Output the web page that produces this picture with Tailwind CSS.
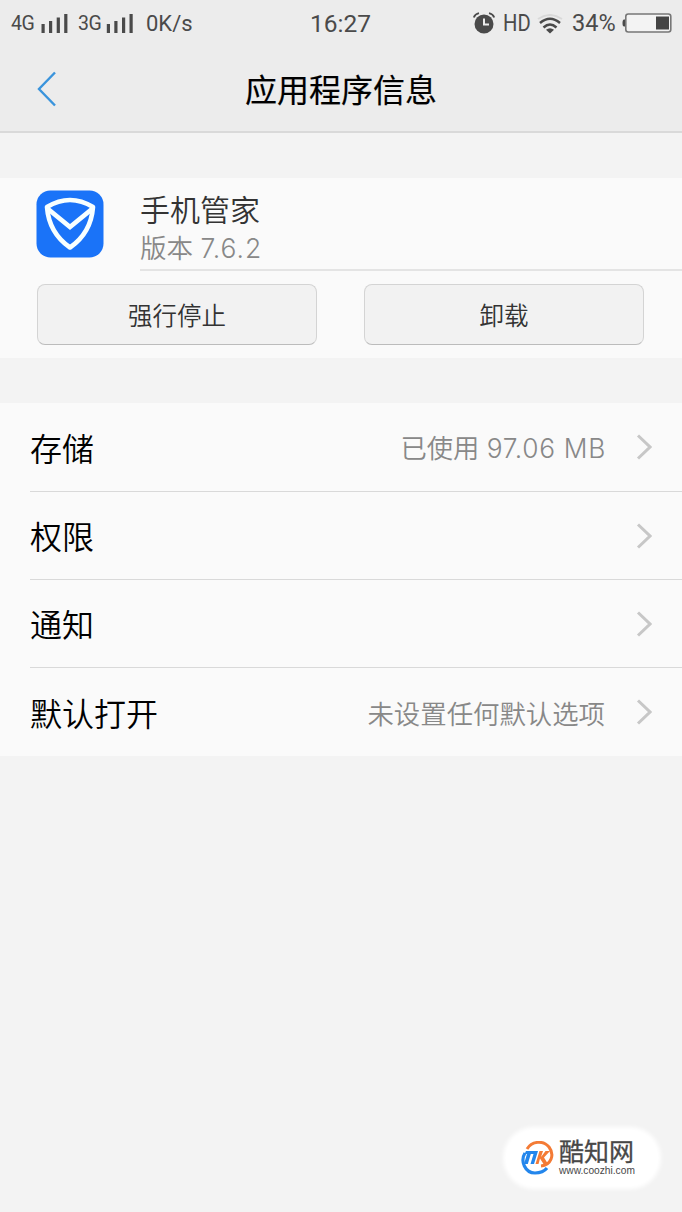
<!DOCTYPE html>
<html lang="zh-CN">
<head>
<meta charset="utf-8">
<title>应用程序信息</title>
<script src="https://cdn.jsdelivr.net/npm/@tailwindcss/browser@4"></script>
</head>
<body class="w-[682px] h-[1212px] overflow-hidden bg-[#f3f3f3] font-['Inter','Noto_Sans_CJK_SC',sans-serif] relative">
<header class="h-[133px] bg-[#ececec] border-b-2 border-[#d9d9d9]">
  <div class="h-[47px] relative flex items-center justify-between pl-[11px] pr-[10px] text-[#4a4a4a] leading-none whitespace-nowrap font-['Roboto',sans-serif]">
    <div class="flex items-center">
      <span class="text-[19.500px] w-[30px] tracking-[-0.5px]">4G</span>
      <svg class="w-[28px] h-[20px] mr-[9px]" viewBox="0 0 28 20" fill="#4a4a4a"><path d="M.5 10h3.200v9H.5zM8 7h3.200v12H8zM15.700 3.500h3.200V19h-3.200zM23.200 0h3.200v19h-3.200z"/></svg>
      <span class="text-[19.500px] w-[28px] tracking-[-0.5px]">3G</span>
      <svg class="w-[28px] h-[20px] mr-[12px]" viewBox="0 0 28 20" fill="#4a4a4a"><path d="M.8 10H4v9H.8zM8.300 7h3.200v12H8.300zM16 3.500h3.200V19H16zM23.500 0h3.200v19h-3.200z"/></svg>
      <span class="text-[22px] pt-px">0K/s</span>
    </div>
    <span class="absolute left-[310px] top-[12px] text-[24.500px]">16:27</span>
    <div class="flex items-center">
      <svg class="w-[22px] h-[22px] mr-[8px] mb-[2px]" viewBox="0 0 22 22"><circle cx="11" cy="12" r="9.500" fill="#4a4a4a"/><path d="M.8 5.500Q2 2 6 1.200M21.200 5.500Q20 2 16 1.200" fill="none" stroke="#4a4a4a" stroke-width="1.800"/><path d="M11 6.500V12.500H16" fill="none" stroke="#ececec" stroke-width="2"/></svg>
      <span class="text-[23.500px] w-[34px] origin-left scale-x-[.86]">HD</span>
      <svg class="w-[26px] h-[20px] mr-[9px]" viewBox="0 0 26 20" fill="none"><path d="M1 5Q13-3 25 5" stroke="#d9d9d9" stroke-width="2"/><path d="M3 9Q13 .5 23 9M6.500 13.500Q13 7.500 19.500 13.500" stroke="#4a4a4a" stroke-width="2.500"/><path d="M9 15.800Q13 12.800 17 15.800L13 19.500z" fill="#4a4a4a"/></svg>
      <span class="text-[23.500px] w-[50px] pt-px">34%</span>
      <svg class="w-[50px] h-[20px] mb-[2px]" viewBox="0 0 50 20"><path d="M3 6.500H2Q.5 6.500.5 10T2 13.500H3z" fill="#4a4a4a"/><rect x="3.800" y="1" width="45" height="18" rx="2.500" fill="#f3f3f3" stroke="#777" stroke-width="1.600"/><path d="M34 3.500H47V16.500H34z" fill="#444"/></svg>
    </div>
  </div>
  <div class="h-[84px] relative flex items-center justify-center">
    <svg class="absolute left-[36px] top-[24px] w-[22px] h-[36px]" viewBox="0 0 22 36" fill="none" stroke="#3a94dc" stroke-width="2.400"><path d="M19 1.500L3 18L19 34.500"/></svg>
    <h1 class="text-[32px] leading-[40px] pt-[3px] font-normal text-black [-webkit-text-stroke:0.2px_black]">应用程序信息</h1>
  </div>
</header>
<section class="mt-[45px] h-[180px] bg-[#fafafa] flex flex-col">
  <div class="flex h-[93px] pl-[36px]">
    <svg class="w-[68px] h-[68px] mt-[12px] mr-[36px]" viewBox="0 0 68 68"><rect x=".5" y=".5" width="67" height="67" rx="14" fill="#1a73f8"/><path d="M11 17Q34 3 57 17Q55 43 34 57.500Q13 43 11 17Z" fill="none" stroke="#f7ffff" stroke-width="4.600" stroke-linejoin="round"/><path d="M12 19L34 37L56 19" fill="none" stroke="#f7ffff" stroke-width="4.800"/></svg>
    <div class="flex-1 border-b-2 border-[#e4e4e4]">
      <div class="mt-[13px] text-[30px] leading-[38px] text-[#333] font-[350]">手机管家</div>
      <div class="text-[26.500px] leading-[38px] text-[#888] font-[350]">版本 <span class="font-light tracking-[0.9px]">7.6.2</span></div>
    </div>
  </div>
  <div class="flex gap-[47px] pl-[37px] pr-[38px] mt-[13px]">
    <button class="flex-1 h-[61px] pt-[3px] rounded-[8px] border border-[#d4d4d4] border-b-[#bcbcbc] bg-[#f2f2f2] text-[24.500px] text-[#333] font-[350]">强行停止</button>
    <button class="flex-1 h-[61px] pt-[3px] rounded-[8px] border border-[#d4d4d4] border-b-[#bcbcbc] bg-[#f2f2f2] text-[24.500px] text-[#333] font-[350]">卸载</button>
  </div>
</section>
<ul class="mt-[45px] h-[353px] bg-[#fafafa] pl-[30px] text-[32px] text-black font-[350]">
  <li class="h-[89px] border-b border-[#d9d9d9] flex items-center pr-[30px]"><span class="flex-1 pt-[5px]">存储</span><span class="pt-[4px] text-[26.300px] text-[#888] mr-[30px]">已使用 <span class="font-light tracking-[0.700px]">97.06 MB</span></span><svg class="w-[16px] h-[26px]" viewBox="0 0 16 26" fill="none" stroke="#c7c7c7" stroke-width="3"><path d="M2 1.500L14 13L2 24.500"/></svg></li>
  <li class="h-[88px] border-b border-[#d9d9d9] flex items-center pr-[30px]"><span class="flex-1 pt-[5px]">权限</span><svg class="w-[16px] h-[26px]" viewBox="0 0 16 26" fill="none" stroke="#c7c7c7" stroke-width="3"><path d="M2 1.500L14 13L2 24.500"/></svg></li>
  <li class="h-[88px] border-b border-[#d9d9d9] flex items-center pr-[30px]"><span class="flex-1 pt-[5px]">通知</span><svg class="w-[16px] h-[26px]" viewBox="0 0 16 26" fill="none" stroke="#c7c7c7" stroke-width="3"><path d="M2 1.500L14 13L2 24.500"/></svg></li>
  <li class="h-[88px] flex items-center pr-[30px]"><span class="flex-1 pt-[5px]">默认打开</span><span class="pt-[5px] text-[26.400px] text-[#888] mr-[31px]">未设置任何默认选项</span><svg class="w-[16px] h-[26px]" viewBox="0 0 16 26" fill="none" stroke="#c7c7c7" stroke-width="3"><path d="M2 1.500L14 13L2 24.500"/></svg></li>
</ul>
<div class="absolute left-[506px] top-[1130px] w-[152px] h-[56px] rounded-[28px] bg-white shadow-[0_0_4px_3px_#fff] flex items-center pl-[15px]">
  <svg class="w-[33px] h-[34px] mr-[5px]" viewBox="0 0 33 34" fill="none"><path d="M6 8C11 0 22-1 28 6C34 14 30 24 20 25" stroke="#f47b35" stroke-width="3"/><path d="M4 12C-1 20 4 32 14 32Q22 32 26 27" stroke="#2386ec" stroke-width="3.200"/><path d="M5 10H17L13 23H9.500L12.500 13H9.800L6.800 23H3L6 13H3.500z" fill="#2386ec"/><path d="M18.500 10H22L20 16L24.500 10H29L23 16.500L27 23H22.500L19 17.500L17.500 23H14.500z" fill="#f47b35"/></svg>
  <div class="text-[#484848]">
    <div class="text-[25px] leading-[25px] h-[25px] font-normal [-webkit-text-stroke:0.3px_#484848]">酷知网</div>
    <div class="text-[10.200px] leading-[11px] whitespace-nowrap font-['Liberation_Sans',sans-serif]">www.coozhi.com</div>
  </div>
</div>
</body>
</html>
